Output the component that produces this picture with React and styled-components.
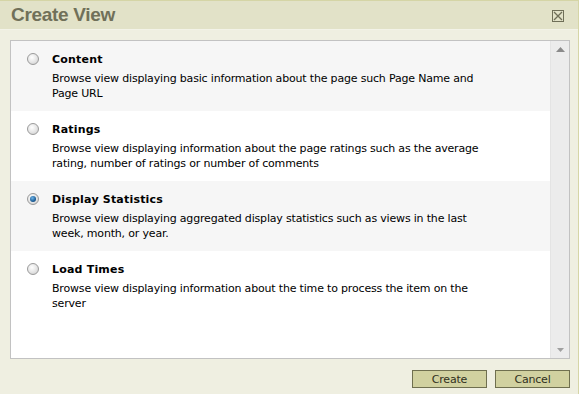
import React, { useState } from "react";
import styled, { createGlobalStyle } from "styled-components";

const Global = createGlobalStyle`
  html, body { margin: 0; padding: 0; background: #efefe1; }
  body { font-family: Tahoma, "DejaVu Sans", sans-serif; }
`;

const Dialog = styled.div`
  width: 578px;
  height: 394px;
  border-right: 1px solid #d5d5a6;
  display: flex;
  flex-direction: column;
  background: #efefe1;
`;

const TitleBar = styled.div`
  height: 28px;
  border-top: 1px solid #d5d5a6;
  border-bottom: 1px solid #f3f3e8;
  background: #e2e2c8;
  display: flex;
  align-items: center;
  justify-content: space-between;
  padding: 0 14px 0 11px;
`;

const Title = styled.h1`
  margin: 0;
  font-family: "Liberation Sans", Arial, sans-serif;
  font-weight: bold;
  font-size: 19px;
  color: #707059;
  letter-spacing: -0.3px;
`;

const CloseBtn = styled.button`
  width: 12px;
  height: 12px;
  padding: 0;
  border: 1px solid #6f6f58;
  background: transparent;
  display: flex;
  align-items: center;
  justify-content: center;
  margin-top: 2px;
`;

const Body = styled.div`
  flex: 1;
  padding: 10px 8px 0 10px;
  display: flex;
  flex-direction: column;
`;

const ListBox = styled.div`
  height: 317px;
  border: 1px solid #c2c2c2;
  background: #fff;
  display: flex;
`;

const List = styled.div`
  flex: 1;
  display: flex;
  flex-direction: column;
`;

const Row = styled.label`
  height: 70px;
  box-sizing: border-box;
  background: ${(p) => (p.$alt ? "#f6f6f6" : "#fff")};
  display: flex;
  padding: 11px 0 0 16px;
  cursor: pointer;
`;

const Radio = styled.span`
  width: 12px;
  height: 12px;
  border-radius: 50%;
  box-sizing: border-box;
  border: 1px solid #9a9a9a;
  background: radial-gradient(circle at 40% 35%, #ffffff 0%, #e4e4e4 55%, #c9c9c9 100%);
  margin-top: 1px;
  flex: none;
  display: flex;
  align-items: center;
  justify-content: center;
  &::after {
    content: "";
    display: ${(p) => (p.$checked ? "block" : "none")};
    width: 6px;
    height: 6px;
    border-radius: 50%;
    background: radial-gradient(circle at 40% 35%, #6fb4e8 0%, #1d5f98 60%, #0c3560 100%);
  }
`;

const Text = styled.div`
  margin-left: 13px;
  width: 445px;
`;

const ItemTitle = styled.div`
  font-family: "DejaVu Sans", Verdana, sans-serif;
  font-weight: bold;
  font-size: 11px;
  color: #000;
  line-height: 15px;
  margin-bottom: 4px;
  letter-spacing: 0.2px;
`;

const ItemDesc = styled.div`
  font-family: "DejaVu Sans", Tahoma, sans-serif;
  font-size: 11px;
  color: #000;
  line-height: 15px;
  letter-spacing: -0.18px;
`;

const ScrollBar = styled.div`
  width: 18px;
  background: #ececec;
  border-left: 1px solid #e4e4e4;
  display: flex;
  flex-direction: column;
  justify-content: space-between;
  align-items: center;
  padding: 6px 0;
`;

const Footer = styled.div`
  display: flex;
  justify-content: flex-end;
  gap: 8px;
  padding-top: 11px;
`;

const Button = styled.button`
  width: 75px;
  height: 18px;
  padding: 0;
  background: #d1d1a0;
  border: 1px solid #6f6f4f;
  font-family: "DejaVu Sans", Tahoma, sans-serif;
  font-size: 11px;
  color: #2f2f1c;
  letter-spacing: -0.2px;
`;

const items = [
  { t: "Content", d: "Browse view displaying basic information about the page such Page Name and Page URL" },
  { t: "Ratings", d: "Browse view displaying information about the page ratings such as the average rating, number of ratings or number of comments" },
  { t: "Display Statistics", d: "Browse view displaying aggregated display statistics such as views in the last week, month, or year." },
  { t: "Load Times", d: "Browse view displaying information about the time to process the item on the server" },
];

export default function App() {
  const [sel, setSel] = useState(2);
  return (
    <>
      <Global />
      <Dialog>
        <TitleBar>
          <Title>Create View</Title>
          <CloseBtn aria-label="Close">
            <svg width="10" height="10" viewBox="0 0 10 10">
              <path d="M1 1L9 9M9 1L1 9" stroke="#6f6f58" strokeWidth="1.3" />
            </svg>
          </CloseBtn>
        </TitleBar>
        <Body>
          <ListBox>
            <List>
              {items.map((it, i) => (
                <Row key={it.t} $alt={i % 2 === 0} onClick={() => setSel(i)}>
                  <Radio $checked={sel === i} />
                  <Text>
                    <ItemTitle>{it.t}</ItemTitle>
                    <ItemDesc>{it.d}</ItemDesc>
                  </Text>
                </Row>
              ))}
            </List>
            <ScrollBar>
              <svg width="9" height="5" viewBox="0 0 9 5">
                <path d="M4.5 0L9 5H0Z" fill="#8a8a8a" />
              </svg>
              <svg width="7" height="4" viewBox="0 0 7 4">
                <path d="M0 0H7L3.5 4Z" fill="#a0a0a0" />
              </svg>
            </ScrollBar>
          </ListBox>
          <Footer>
            <Button>Create</Button>
            <Button>Cancel</Button>
          </Footer>
        </Body>
      </Dialog>
    </>
  );
}
